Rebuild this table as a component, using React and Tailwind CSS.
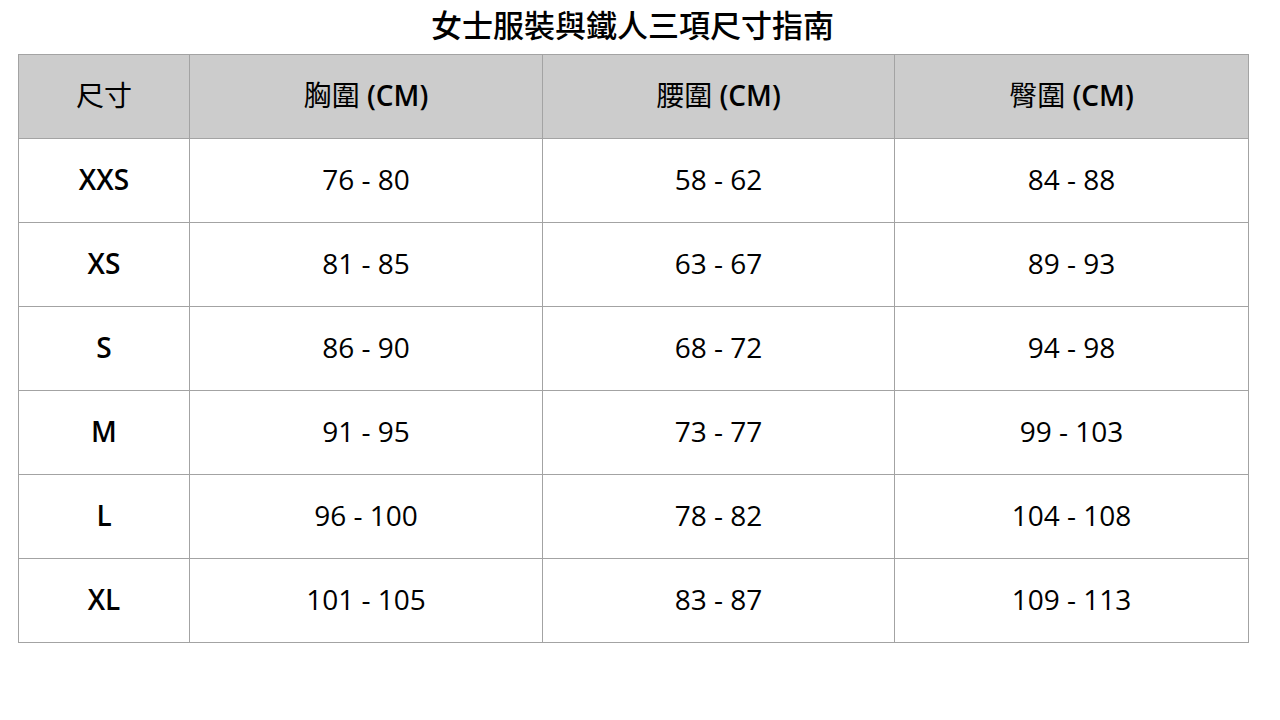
const rows = [
  ["XXS", "76 - 80", "58 - 62", "84 - 88"],
  ["XS", "81 - 85", "63 - 67", "89 - 93"],
  ["S", "86 - 90", "68 - 72", "94 - 98"],
  ["M", "91 - 95", "73 - 77", "99 - 103"],
  ["L", "96 - 100", "78 - 82", "104 - 108"],
  ["XL", "101 - 105", "83 - 87", "109 - 113"],
];

// [cjk part, latin part]
const headers = [
  ["尺寸", ""],
  ["胸圍", " (CM)"],
  ["腰圍", " (CM)"],
  ["臀圍", " (CM)"],
];

export default function App() {
  return (
    <div
      className="w-[1280px] h-[720px] bg-white text-black"
      style={{ fontFamily: '"Open Sans", "Noto Sans CJK TC", sans-serif' }}
    >
      <h1 className="h-[54px] flex items-center justify-center text-[31px] font-medium pb-[4px] pr-[15px]">
        女士服裝與鐵人三項尺寸指南
      </h1>
      <table className="ml-[18px] border-collapse table-fixed w-[1230px]">
        <colgroup>
          <col className="w-[171px]" />
          <col className="w-[353px]" />
          <col className="w-[352px]" />
          <col className="w-[354px]" />
        </colgroup>
        <thead>
          <tr className="bg-[#cccccc] h-[84px]">
            {headers.map(([cjk, latin]) => (
              <th key={cjk} className="border border-[#a3a3a3] text-[28px] text-center pb-[4px]">
                <span className="font-normal">{cjk}</span>
                <span className="font-semibold">{latin}</span>
              </th>
            ))}
          </tr>
        </thead>
        <tbody>
          {rows.map((r) => (
            <tr key={r[0]} className="h-[84px]">
              {r.map((c, i) => (
                <td
                  key={i}
                  className={`border border-[#a3a3a3] text-[28px] text-center pb-[4px] ${i === 0 ? "font-semibold" : "font-normal"}`}
                >
                  {c}
                </td>
              ))}
            </tr>
          ))}
        </tbody>
      </table>
    </div>
  );
}
